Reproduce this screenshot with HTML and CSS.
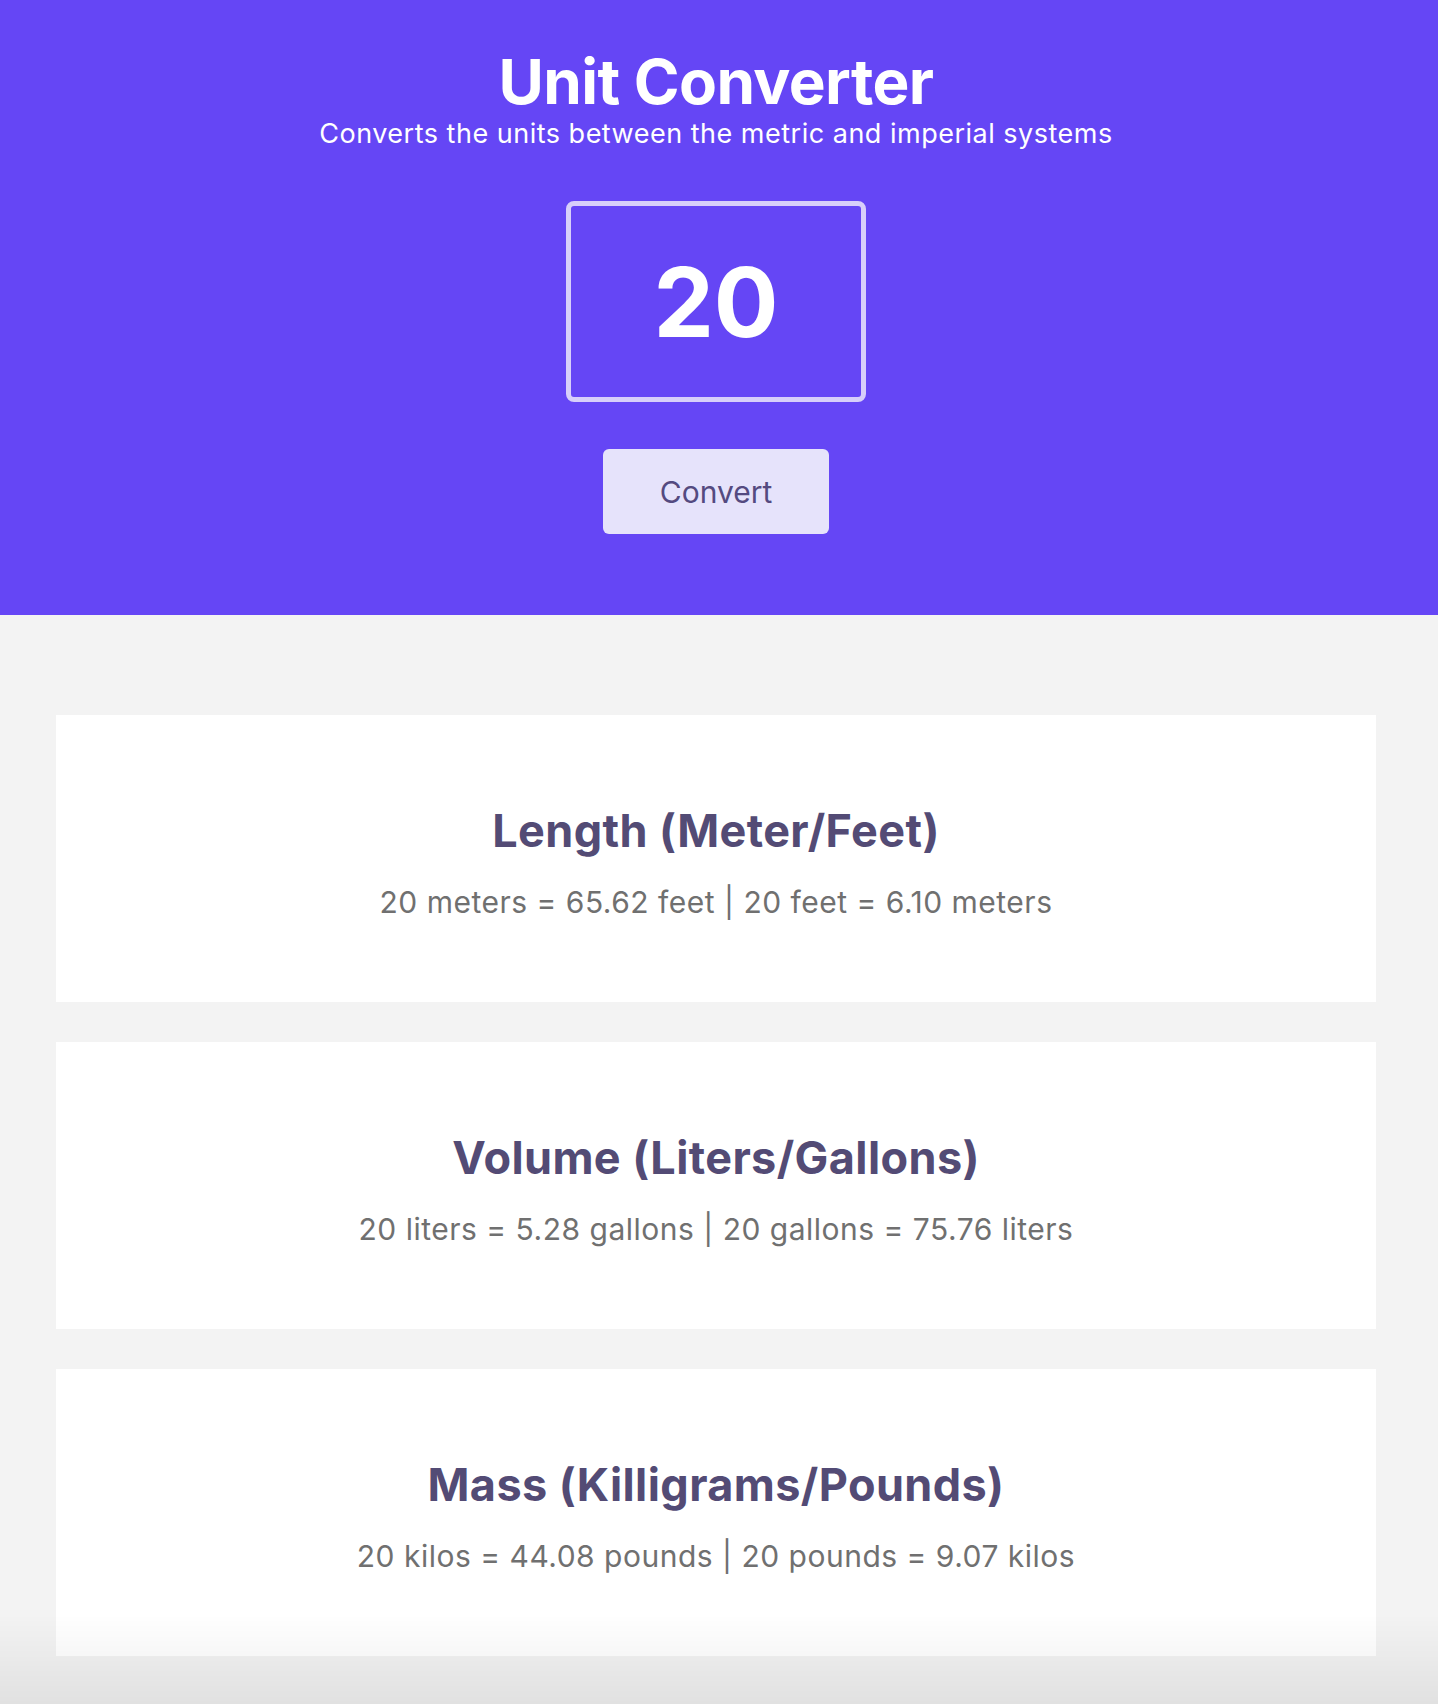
FILE: index.html
```html
<!DOCTYPE html>
<html lang="en">
<head>
<meta charset="utf-8">
<title>Unit Converter</title>
<link rel="stylesheet" href="styles.css">
</head>
<body>
<header class="hero">
  <h1 class="hero-title">Unit Converter</h1>
  <p class="hero-sub">Converts the units between the metric and imperial systems</p>
  <input class="hero-input" type="text" value="20">
  <button class="hero-btn">Convert</button>
</header>
<main class="results">
  <section class="card">
    <h2 class="card-title">Length (Meter/Feet)</h2>
    <p class="card-text">20 meters = 65.62 feet | 20 feet = 6.10 meters</p>
  </section>
  <section class="card">
    <h2 class="card-title">Volume (Liters/Gallons)</h2>
    <p class="card-text">20 liters = 5.28 gallons | 20 gallons = 75.76 liters</p>
  </section>
  <section class="card">
    <h2 class="card-title">Mass (Killigrams/Pounds)</h2>
    <p class="card-text">20 kilos = 44.08 pounds | 20 pounds = 9.07 kilos</p>
  </section>
</main>
<div class="fade"></div>
</body>
</html>
```

FILE: styles.css
```css
* { box-sizing: border-box; }
html, body { margin: 0; padding: 0; }
body {
  font-family: Inter, "Noto Sans", sans-serif;
  background: #f3f3f3;
}
.hero {
  background: #6546f5;
  color: #ffffff;
  display: flex;
  flex-direction: column;
  align-items: center;
  padding: 46px 6px 81px 0;
}
.hero-title {
  margin: 0;
  font-size: 62px;
  line-height: 72px;
  font-weight: 700;
  letter-spacing: -0.6px;
}
.hero-sub {
  margin: 0;
  font-size: 27px;
  line-height: 32px;
  font-weight: 400;
  letter-spacing: 0.5px;
}
.hero-input {
  margin-top: 51px;
  width: 300px;
  height: 201px;
  border: 5px solid #d7cffa;
  border-radius: 8px;
  background: transparent;
  color: #ffffff;
  font-family: inherit;
  font-size: 96px;
  font-weight: 700;
  text-align: center;
  outline: none;
  padding: 0;
}
.hero-btn {
  margin-top: 47px;
  width: 226px;
  height: 85px;
  border: none;
  border-radius: 6px;
  background: #e6e3fb;
  color: #544a80;
  font-family: inherit;
  font-size: 30px;
  font-weight: 400;
  cursor: pointer;
}
.results {
  display: flex;
  flex-direction: column;
  gap: 40px;
  padding: 100px 62px 60px 56px;
}
.card {
  background: #ffffff;
  height: 287px;
  padding-top: 90px;
  text-align: center;
}
.card-title {
  margin: 0;
  font-size: 45px;
  line-height: 52px;
  font-weight: 700;
  color: #534b75;
  letter-spacing: 0.4px;
}
.card-text {
  margin: 28px 0 0;
  font-size: 30px;
  line-height: 34px;
  color: #707070;
  letter-spacing: 0.5px;
}
.fade {
  position: fixed;
  left: 0;
  right: 0;
  bottom: 0;
  height: 90px;
  background: linear-gradient(to bottom, rgba(0,0,0,0), rgba(0,0,0,0.07));
  pointer-events: none;
}
```
